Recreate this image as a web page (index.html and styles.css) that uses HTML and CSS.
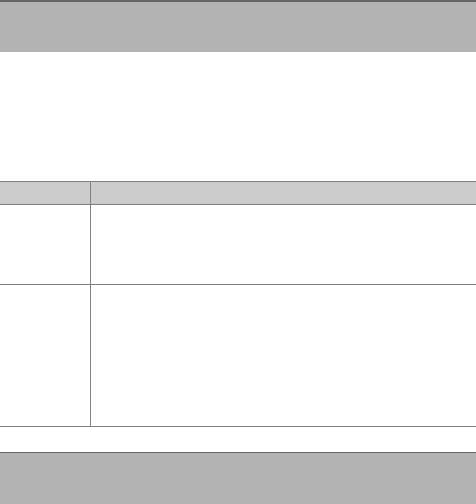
FILE: index.html
```html
<!DOCTYPE html>
<html lang="en">
<head>
<meta charset="utf-8">
<title>Layout</title>
<link rel="stylesheet" href="styles.css">
</head>
<body>
<header class="topbar"></header>
<main class="content">
  <div class="grid-table">
    <div class="row head">
      <div class="cell key"></div>
      <div class="cell val"></div>
    </div>
    <div class="row r1">
      <div class="cell key"></div>
      <div class="cell val"></div>
    </div>
    <div class="row r2">
      <div class="cell key"></div>
      <div class="cell val"></div>
    </div>
  </div>
</main>
<footer class="bottombar"></footer>
</body>
</html>
```
FILE: styles.css
```css
html, body {
  margin: 0;
  padding: 0;
  background: #ffffff;
  font-family: "Liberation Sans", Arial, sans-serif;
}
body {
  width: 476px;
  height: 504px;
  display: flex;
  flex-direction: column;
  overflow: hidden;
}
.topbar {
  height: 50px;
  border-top: 2px solid #666666;
  background: #b3b3b3;
  flex: none;
}
.content {
  padding-top: 129px;
  padding-bottom: 25px;
  flex: none;
}
.grid-table {
  border-top: 1px solid #808080;
}
.row {
  display: grid;
  grid-template-columns: 91px 1fr;
  border-bottom: 1px solid #808080;
}
.row.head {
  height: 22px;
  background: #cccccc;
}
.row.r1 {
  height: 79px;
}
.row.r2 {
  height: 141px;
}
.cell.key {
  border-right: 1px solid #808080;
}
.bottombar {
  flex: 1;
  border-top: 1px solid #666666;
  background: #b3b3b3;
}
```
